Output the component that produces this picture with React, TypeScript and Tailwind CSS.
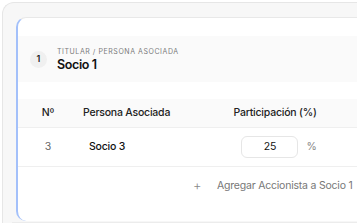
export default function App() {
  return (
    <div className="h-[223px] w-[357px] overflow-hidden bg-white font-['Inter',sans-serif]">
      <div className="ml-[2px] mt-[2px] h-[260px] w-[400px] rounded-tl-[12px] border-l border-t border-[#e6e6e6] bg-[#f7f7f7] pl-[13px] pt-[14px]">
        <div className="h-[204px] w-[400px] rounded-l-[10px] border-l-2 border-t border-[#e8e8e8] border-l-[#a3c0fa] bg-white pt-[18px]">
          <div className="flex h-[46px] items-center gap-[10px] bg-[#fafafa] pl-[12px]">
            <div className="flex h-[17px] w-[17px] items-center justify-center rounded-full bg-[#f0f0f0] text-[9px] font-semibold text-[#222]">
              1
            </div>
            <div className="flex flex-col">
              <span className="text-[7px] uppercase leading-[11px] tracking-[0.08em] text-[#7a7a7a]">
                Titular / Persona Asociada
              </span>
              <span className="text-[12.5px] font-semibold leading-[16px] tracking-[-0.03em] text-[#111]">
                Socio 1
              </span>
            </div>
          </div>

          <div className="mt-[17px] flex h-[29px] items-center border-b border-[#efefef] bg-[#fafafa] text-[10.5px] font-medium tracking-[-0.02em] text-[#222]">
            <div className="w-[60px] text-center">Nº</div>
            <div className="w-[122px] pl-[5px]">Persona Asociada</div>
            <div className="w-[150px] text-center">Participación (%)</div>
          </div>

          <div className="flex h-[39px] items-center border-b border-[#efefef] text-[10.5px] tracking-[-0.02em]">
            <div className="w-[60px] text-center text-[#666]">3</div>
            <div className="w-[122px] pl-[11px] font-medium text-[#111]">Socio 3</div>
            <div className="flex w-[150px] items-center justify-center gap-[8px] pl-[8px]">
              <div className="flex h-[22px] w-[57px] items-center justify-center rounded-[6px] border border-[#e6e6e6] text-[#111]">
                25
              </div>
              <span className="text-[#888]">%</span>
            </div>
          </div>

          <div className="flex h-[38px] items-center pl-[175px] text-[10.5px] tracking-[-0.02em] text-[#777]">
            <span className="w-[24px] text-[13px] font-light text-[#888]">+</span>
            <span>Agregar Accionista a Socio 1</span>
          </div>
        </div>
        <div className="-ml-[4px] mt-[1px] h-[4px] bg-[#ececec]" />
      </div>
    </div>
  );
}
